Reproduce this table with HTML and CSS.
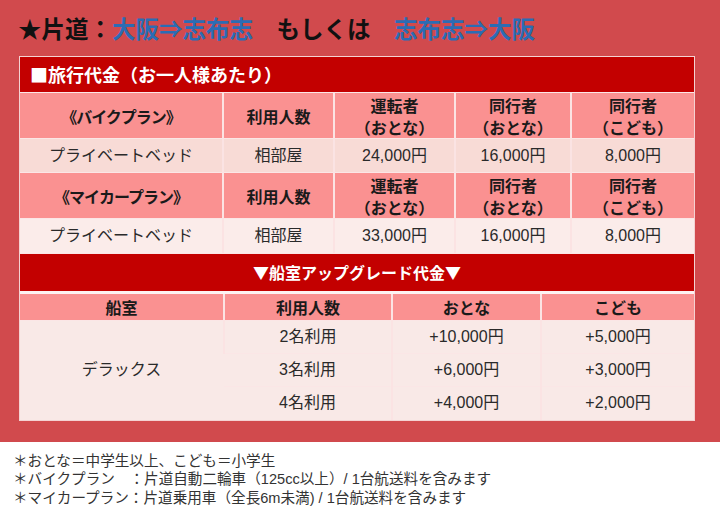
FILE: index.html
```html
<!DOCTYPE html>
<html lang="ja">
<head>
<meta charset="utf-8">
<title>料金表</title>
<link rel="stylesheet" href="styles.css">
</head>
<body>
<section class="board">
  <h1 class="title">★片道：<span class="route">大阪⇒志布志</span>　もしくは　<span class="route">志布志⇒大阪</span></h1>
  <div class="panel">
    <div class="bar bar-left">■旅行代金（お一人様あたり）</div>
    <table class="grid grid-plan">
      <colgroup>
        <col class="p1"><col class="p2"><col class="p3"><col class="p4"><col class="p5">
      </colgroup>
      <tr class="hrow">
        <th class="plan">《バイクプラン》</th>
        <th>利用人数</th>
        <th>運転者<br>（おとな）</th>
        <th>同行者<br>（おとな）</th>
        <th>同行者<br>（こども）</th>
      </tr>
      <tr class="vrow vrow-a">
        <td>プライベートベッド</td>
        <td>相部屋</td>
        <td>24,000円</td>
        <td>16,000円</td>
        <td>8,000円</td>
      </tr>
      <tr class="hrow">
        <th class="plan">《マイカープラン》</th>
        <th>利用人数</th>
        <th>運転者<br>（おとな）</th>
        <th>同行者<br>（おとな）</th>
        <th>同行者<br>（こども）</th>
      </tr>
      <tr class="vrow vrow-b">
        <td>プライベートベッド</td>
        <td>相部屋</td>
        <td>33,000円</td>
        <td>16,000円</td>
        <td>8,000円</td>
      </tr>
    </table>
    <div class="bar bar-center">▼船室アップグレード代金▼</div>
    <table class="grid grid-up">
      <colgroup>
        <col class="u1"><col class="u2"><col class="u3"><col class="u4">
      </colgroup>
      <tr class="uhead">
        <th>船室</th>
        <th>利用人数</th>
        <th>おとな</th>
        <th>こども</th>
      </tr>
      <tr class="urow">
        <td rowspan="3">デラックス</td>
        <td>2名利用</td>
        <td>+10,000円</td>
        <td>+5,000円</td>
      </tr>
      <tr class="urow">
        <td>3名利用</td>
        <td>+6,000円</td>
        <td>+3,000円</td>
      </tr>
      <tr class="urow">
        <td>4名利用</td>
        <td>+4,000円</td>
        <td>+2,000円</td>
      </tr>
    </table>
  </div>
</section>
<div class="notes">
  <p>＊おとな＝中学生以上、こども＝小学生</p>
  <p>＊バイクプラン　：片道自動二輪車（125cc以上）/ 1台航送料を含みます</p>
  <p>＊マイカープラン：片道乗用車（全長6m未満) / 1台航送料を含みます</p>
</div>
</body>
</html>
```

FILE: styles.css
```css
html, body {
  margin: 0;
  padding: 0;
  background: #ffffff;
}

body {
  font-family: "Liberation Sans", "Noto Sans CJK JP", sans-serif;
  color: #222;
}

.board {
  background: #d14a4d;
  padding: 12px 25px 21px 19px;
}

.title {
  margin: 0 0 12px -1px;
  font-size: 23.5px;
  line-height: 32px;
  font-weight: bold;
  color: #111;
  font-family: "Noto Sans CJK JP", sans-serif;
}

.route {
  color: #2b6cb4;
}

.panel {
  width: 676px;
  border: 1px solid #f4d2d2;
  box-sizing: border-box;
  background: #fbeeee;
}

.bar {
  background: #c30000;
  color: #ffffff;
  font-weight: bold;
  font-family: "Noto Sans CJK JP", sans-serif;
}

.bar-left {
  height: 35px;
  line-height: 35px;
  font-size: 18px;
  padding-left: 10px;
}

.bar-center {
  height: 37px;
  line-height: 37px;
  font-size: 16px;
  text-align: center;
  border-top: 1px solid #fbe6e6;
  border-bottom: 3px solid #fdf2f2;
}

.grid {
  width: 100%;
  table-layout: fixed;
  border-collapse: collapse;
}

.grid th,
.grid td {
  padding: 0;
  text-align: center;
  vertical-align: middle;
}

.grid th + th,
.grid td + td,
.grid th + td {
  border-left: 2px solid #fbe3e3;
}

.grid tr + tr > th,
.grid tr + tr > td {
  border-top: 1px solid #fbe6e6;
}

.grid-plan { border-top: 1px solid #fbe6e6; }

.p1 { width: 203px; }
.p2 { width: 111px; }
.p3 { width: 121px; }
.p4 { width: 116px; }
.p5 { width: auto; }

.u1 { width: 204px; }
.u2 { width: 168px; }
.u3 { width: 149px; }
.u4 { width: auto; }

.hrow th,
.uhead th {
  background: #fa9191;
  color: #1a1a1a;
  font-weight: bold;
  font-size: 16px;
  line-height: 22px;
  font-family: "Noto Sans CJK JP", sans-serif;
}

.hrow { height: 46px; }

.plan {
  font-size: 15px;
  letter-spacing: -1px;
}

.vrow { height: 34px; }

.vrow td,
.urow td {
  font-size: 16px;
  line-height: 20px;
  color: #2a2a2a;
}

.vrow-a td { background: #f8dbd6; }
.vrow-b td { background: #fbecea; }

.uhead { height: 27px; }
.uhead th { line-height: 20px; }

.urow { height: 33px; }
.urow td { background: #f9e9e7; }

.notes {
  padding: 10px 13px;
  font-size: 14.6px;
  line-height: 18.5px;
  color: #333;
}

.notes p {
  margin: 0;
}
```
